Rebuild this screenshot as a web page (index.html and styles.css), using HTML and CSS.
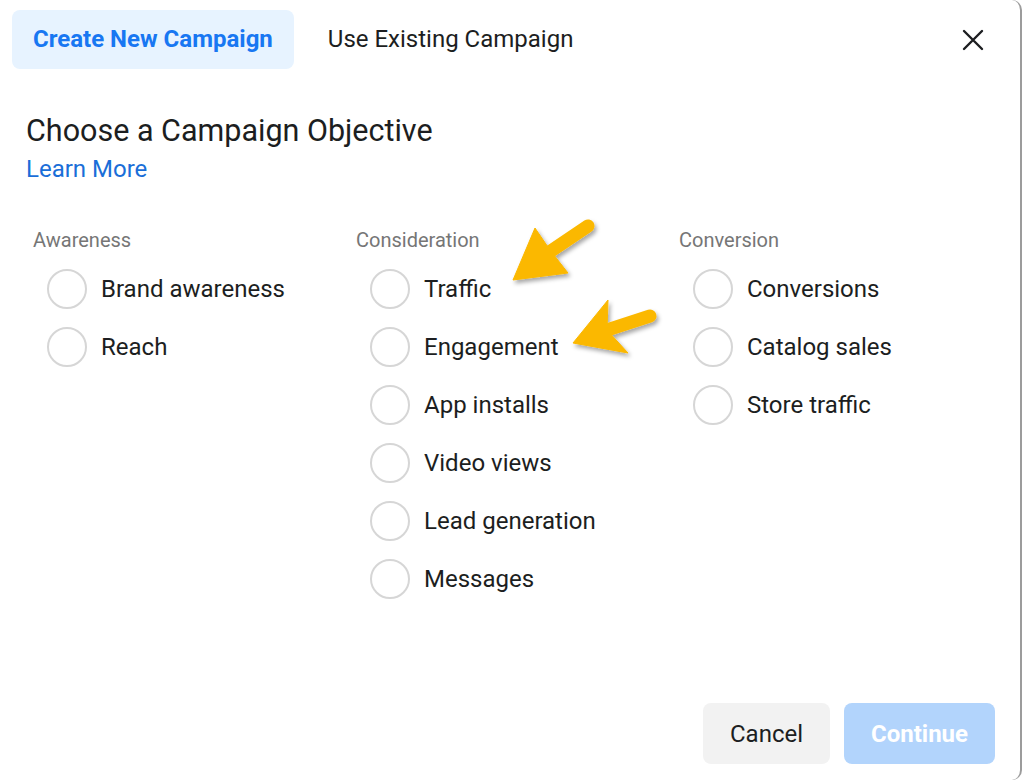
FILE: index.html
```html
<!DOCTYPE html>
<html lang="en">

<head>
  <meta charset="UTF-8">
  <meta name="viewport" content="width=device-width, initial-scale=1.0">
  <title>Create New Campaign</title>
  <link rel="stylesheet" href="styles.css">
</head>

<body>
  <div class="dialog">
    <header class="tabs">
      <div class="tab tab-active">Create New Campaign</div>
      <div class="tab">Use Existing Campaign</div>
      <button class="close" aria-label="Close">
        <svg width="22" height="22" viewBox="0 0 22 22">
          <path d="M2 2 L20 20 M20 2 L2 20" stroke="#1c1e21" stroke-width="2.4" stroke-linecap="round" fill="none" />
        </svg>
      </button>
    </header>

    <main class="content">
      <h1 class="title">Choose a Campaign Objective</h1>
      <a class="learn" href="#">Learn More</a>

      <div class="columns">
        <div class="column">
          <div class="column-title">Awareness</div>
          <label class="option"><span class="radio"></span>Brand awareness</label>
          <label class="option"><span class="radio"></span>Reach</label>
        </div>
        <div class="column">
          <div class="column-title">Consideration</div>
          <label class="option"><span class="radio"></span>Traffic</label>
          <label class="option"><span class="radio"></span>Engagement</label>
          <label class="option"><span class="radio"></span>App installs</label>
          <label class="option"><span class="radio"></span>Video views</label>
          <label class="option"><span class="radio"></span>Lead generation</label>
          <label class="option"><span class="radio"></span>Messages</label>
        </div>
        <div class="column">
          <div class="column-title">Conversion</div>
          <label class="option"><span class="radio"></span>Conversions</label>
          <label class="option"><span class="radio"></span>Catalog sales</label>
          <label class="option"><span class="radio"></span>Store traffic</label>
        </div>
      </div>
    </main>

    <footer class="footer">
      <button class="btn btn-cancel">Cancel</button>
      <button class="btn btn-continue">Continue</button>
    </footer>

    <!-- callout arrows drawn over the dialog -->
    <svg class="arrows" width="1024" height="780" viewBox="0 0 1024 780">
      <defs>
        <filter id="shadow" x="-20%" y="-20%" width="140%" height="140%">
          <feDropShadow dx="2" dy="3" stdDeviation="2" flood-color="#000" flood-opacity="0.35" />
        </filter>
      </defs>
      <g fill="#fbb800" stroke="#fbb800" filter="url(#shadow)">
        <line x1="548" y1="253" x2="588" y2="226" stroke-width="13" stroke-linecap="round" />
        <polygon points="513,280 535,228 550,250 568,273" stroke-width="1" />
      </g>
      <g fill="#fbb800" stroke="#fbb800" filter="url(#shadow)">
        <line x1="604" y1="331" x2="650" y2="316" stroke-width="13" stroke-linecap="round" />
        <polygon points="573,343 608,300 607,330 628,353" stroke-width="1" />
      </g>
    </svg>
  </div>
</body>

</html>
```

FILE: styles.css
```css
body {
  margin: 0;
  padding: 0;
  font-family: Roboto, "Liberation Sans", Arial, sans-serif;
  color: #1c1e21;
  background: #fff;
}

.dialog {
  position: relative;
  width: 1022px;
  height: 780px;
  box-sizing: border-box;
  border-right: 2px solid #9c9c9c;
  border-radius: 0 10px 10px 0;
  display: flex;
  flex-direction: column;
}

.tabs {
  display: flex;
  align-items: center;
  padding: 10px 36px 0 12px;
}

.tab {
  height: 59px;
  line-height: 59px;
  font-size: 24px;
  padding: 0 21px;
  border-radius: 8px;
}

.tab + .tab {
  margin-left: 13px;
}

.tab-active {
  background-color: #e7f3ff;
  color: #1877f2;
  font-weight: bold;
}

.close {
  margin-left: auto;
  background: none;
  border: none;
  padding: 0;
  width: 22px;
  height: 22px;
  cursor: pointer;
}

.close svg {
  display: block;
}

.content {
  padding: 0 0 0 26px;
}

.title {
  font-size: 30.5px;
  font-weight: normal;
  margin: 43px 0 0 0;
  line-height: 38px;
}

.learn {
  display: inline-block;
  font-size: 24px;
  line-height: 30px;
  color: #1a6ed8;
  text-decoration: none;
  margin-top: 4px;
}

.columns {
  display: grid;
  grid-template-columns: 323px 323px 323px;
  margin: 43px 0 0 7px;
}

.column-title {
  font-size: 20px;
  color: #767676;
  line-height: 26px;
  margin-bottom: 7px;
}

.option {
  display: flex;
  align-items: center;
  height: 58px;
  font-size: 24px;
  padding-left: 14px;
}

.radio {
  width: 40px;
  height: 40px;
  box-sizing: border-box;
  border: 2px solid #d6d6d6;
  border-radius: 50%;
  margin-right: 14px;
  flex-shrink: 0;
}

.footer {
  margin-top: auto;
  display: flex;
  justify-content: flex-end;
  gap: 14px;
  padding: 0 25px 16px 0;
}

.btn {
  height: 61px;
  border: none;
  border-radius: 8px;
  font-family: inherit;
  font-size: 24px;
  padding: 0;
}

.btn-cancel {
  width: 127px;
  background-color: #f2f2f2;
  color: #1c1e21;
}

.btn-continue {
  width: 151px;
  background-color: #b2d4fc;
  color: #fff;
  font-weight: bold;
}

.arrows {
  position: absolute;
  left: 0;
  top: 0;
  pointer-events: none;
}
```
